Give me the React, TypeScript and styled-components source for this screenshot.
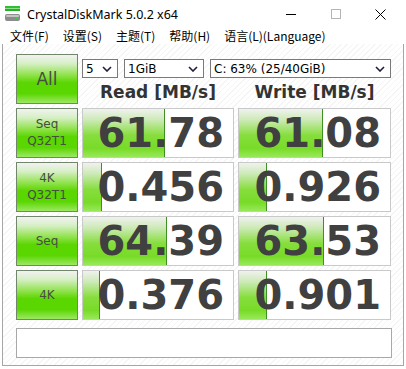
import React from "react";
import styled, { createGlobalStyle } from "styled-components";

const GlobalStyle = createGlobalStyle`
    html, body {
        margin: 0;
        padding: 0;
        background: #ffffff;
    }
`;

const Window = styled.div`
    width: 406px;
    height: 369px;
    background: #ffffff;
    display: flex;
    flex-direction: column;
    font-family: "DejaVu Sans", sans-serif;
    overflow: hidden;
`;

const TitleBar = styled.div`
    height: 28px;
    display: flex;
    align-items: center;
    padding-left: 5px;
    padding-right: 3px;
`;

const Title = styled.div`
    flex: 1;
    margin-left: 6px;
    font-family: "Noto Sans", sans-serif;
    font-size: 12.5px;
    color: #000000;
`;

const Controls = styled.div`
    display: flex;
    height: 28px;
`;

const ControlButton = styled.div`
    width: 45px;
    display: flex;
    align-items: center;
    justify-content: center;
`;

const MenuBar = styled.div`
    height: 16px;
    display: flex;
    align-items: center;
    padding-left: 10px;
    gap: 14px;
`;

const MenuItem = styled.span`
    font-family: "Noto Sans CJK SC", sans-serif;
    font-size: 12px;
    line-height: 16px;
    color: #000000;
`;

const Body = styled.div`
    flex: 1;
    margin: 0 2px 3px 2px;
    border: 1px solid #a6a6a6;
    border-top: none;
    padding: 10px 11px 7px 13px;
    background: repeating-linear-gradient(135deg, #ffffff 0 3px, #f5f5f5 3px 4px);
    display: flex;
    flex-direction: column;
`;

const Grid = styled.div`
    display: grid;
    grid-template-columns: 62px 152px 153px;
    grid-template-rows: 24px 22px 50px 50px 50px 50px;
    column-gap: 4px;
    row-gap: 4px;
`;

const TestButton = styled.div<{ $big?: boolean }>`
    box-sizing: border-box;
    border: 1px solid #71866a;
    background: linear-gradient(to bottom, #f2f2f2 0%, #d6efc4 18%, #8fe24a 42%, #5ad600 58%, #5ad600 80%, #9ce862 100%);
    display: flex;
    align-items: center;
    justify-content: center;
    text-align: center;
    color: #454f40;
    font-size: ${(p) => (p.$big ? "17px" : "12px")};
    line-height: ${(p) => (p.$big ? "20px" : "17px")};
    grid-row: ${(p) => (p.$big ? "1 / span 2" : "auto")};
`;

const Selects = styled.div`
    grid-column: 2 / span 2;
    display: flex;
    gap: 6px;
    align-items: flex-end;
`;

const Select = styled.div<{ $w: number }>`
    box-sizing: border-box;
    width: ${(p) => p.$w}px;
    height: 19px;
    border: 1px solid #7a7a7a;
    background: #ffffff;
    display: flex;
    align-items: center;
    justify-content: space-between;
    padding: 0 5px 0 3px;
    font-size: 12px;
    color: #000000;
`;

const Header = styled.div`
    display: flex;
    align-items: center;
    justify-content: center;
    font-weight: bold;
    font-size: 17px;
    color: #333333;
    padding-bottom: 2px;
`;

const Cell = styled.div`
    position: relative;
    box-sizing: border-box;
    border: 1px solid #c9c9c9;
    background: #ffffff;
    display: flex;
    align-items: center;
    justify-content: flex-end;
    padding-right: 9px;
    overflow: hidden;
`;

const Fill = styled.div`
    position: absolute;
    left: 0;
    top: 0;
    bottom: 0;
    box-sizing: border-box;
    border-right: 1px solid #3f8f22;
    background: linear-gradient(to bottom, #f0f2ee 0%, #cdeab8 22%, #86de3c 55%, #78db28 82%, #98e858 100%);
`;

const Value = styled.span`
    position: relative;
    font-weight: bold;
    font-size: 40px;
    line-height: 1;
    color: #404040;
`;

const Status = styled.div`
    margin-top: 8px;
    height: 30px;
    box-sizing: border-box;
    border: 1px solid #a8a8a8;
    background: #ffffff;
`;

const Chevron = () => (
    <svg width="10" height="6" viewBox="0 0 10 6">
        <polyline points="1,1 5,5 9,1" fill="none" stroke="#1e1e3c" strokeWidth="1.6" />
    </svg>
);

const AppIcon = () => (
    <svg width="16" height="16" viewBox="0 0 16 16">
        <rect x="0" y="0" width="15" height="2" fill="#2fbf2f" />
        <rect x="0" y="2" width="15" height="1" fill="#8fe08f" />
        <rect x="0" y="3" width="15" height="2" fill="#26b026" />
        <rect x="0" y="8" width="15" height="7" rx="2" fill="#8c8c8c" />
        <rect x="1" y="9" width="13" height="2" rx="1" fill="#c4c4c4" />
        <rect x="11" y="11" width="2" height="2" fill="#39d039" />
    </svg>
);

const rows = [
    { label: ["Seq", "Q32T1"], read: "61.78", readW: 82, write: "61.08", writeW: 84 },
    { label: ["4K", "Q32T1"], read: "0.456", readW: 19, write: "0.926", writeW: 28 },
    { label: ["Seq"], read: "64.39", readW: 84, write: "63.53", writeW: 85 },
    { label: ["4K"], read: "0.376", readW: 17, write: "0.901", writeW: 28 },
];

const App = () => {
    return (
        <>
            <GlobalStyle />
            <Window>
                <TitleBar>
                    <AppIcon />
                    <Title>CrystalDiskMark 5.0.2 x64</Title>
                    <Controls>
                        <ControlButton>
                            <svg width="10" height="10" viewBox="0 0 10 10">
                                <line x1="0" y1="5.5" x2="10" y2="5.5" stroke="#000" strokeWidth="1" />
                            </svg>
                        </ControlButton>
                        <ControlButton>
                            <svg width="10" height="10" viewBox="0 0 10 10">
                                <rect x="0.5" y="0.5" width="9" height="9" fill="none" stroke="#b5b5b5" strokeWidth="1" />
                            </svg>
                        </ControlButton>
                        <ControlButton>
                            <svg width="11" height="11" viewBox="0 0 11 11">
                                <line x1="0.5" y1="0.5" x2="10.5" y2="10.5" stroke="#000" strokeWidth="1" />
                                <line x1="10.5" y1="0.5" x2="0.5" y2="10.5" stroke="#000" strokeWidth="1" />
                            </svg>
                        </ControlButton>
                    </Controls>
                </TitleBar>
                <MenuBar>
                    <MenuItem>文件(F)</MenuItem>
                    <MenuItem>设置(S)</MenuItem>
                    <MenuItem>主题(T)</MenuItem>
                    <MenuItem>帮助(H)</MenuItem>
                    <MenuItem>语言(L)(Language)</MenuItem>
                </MenuBar>
                <Body>
                    <Grid>
                        <TestButton $big>All</TestButton>
                        <Selects>
                            <Select $w={36}>
                                <span>5</span>
                                <Chevron />
                            </Select>
                            <Select $w={80}>
                                <span>1GiB</span>
                                <Chevron />
                            </Select>
                            <Select $w={181}>
                                <span>C: 63% (25/40GiB)</span>
                                <Chevron />
                            </Select>
                        </Selects>
                        <Header>Read [MB/s]</Header>
                        <Header>Write [MB/s]</Header>
                        {rows.map((r) => (
                            <React.Fragment key={r.label.join("-")}>
                                <TestButton>
                                    {r.label.map((l) => (
                                        <React.Fragment key={l}>
                                            {l}
                                            <br />
                                        </React.Fragment>
                                    ))}
                                </TestButton>
                                <Cell>
                                    <Fill style={{ width: r.readW }} />
                                    <Value>{r.read}</Value>
                                </Cell>
                                <Cell>
                                    <Fill style={{ width: r.writeW }} />
                                    <Value>{r.write}</Value>
                                </Cell>
                            </React.Fragment>
                        ))}
                    </Grid>
                    <Status />
                </Body>
            </Window>
        </>
    );
};

export default App;
